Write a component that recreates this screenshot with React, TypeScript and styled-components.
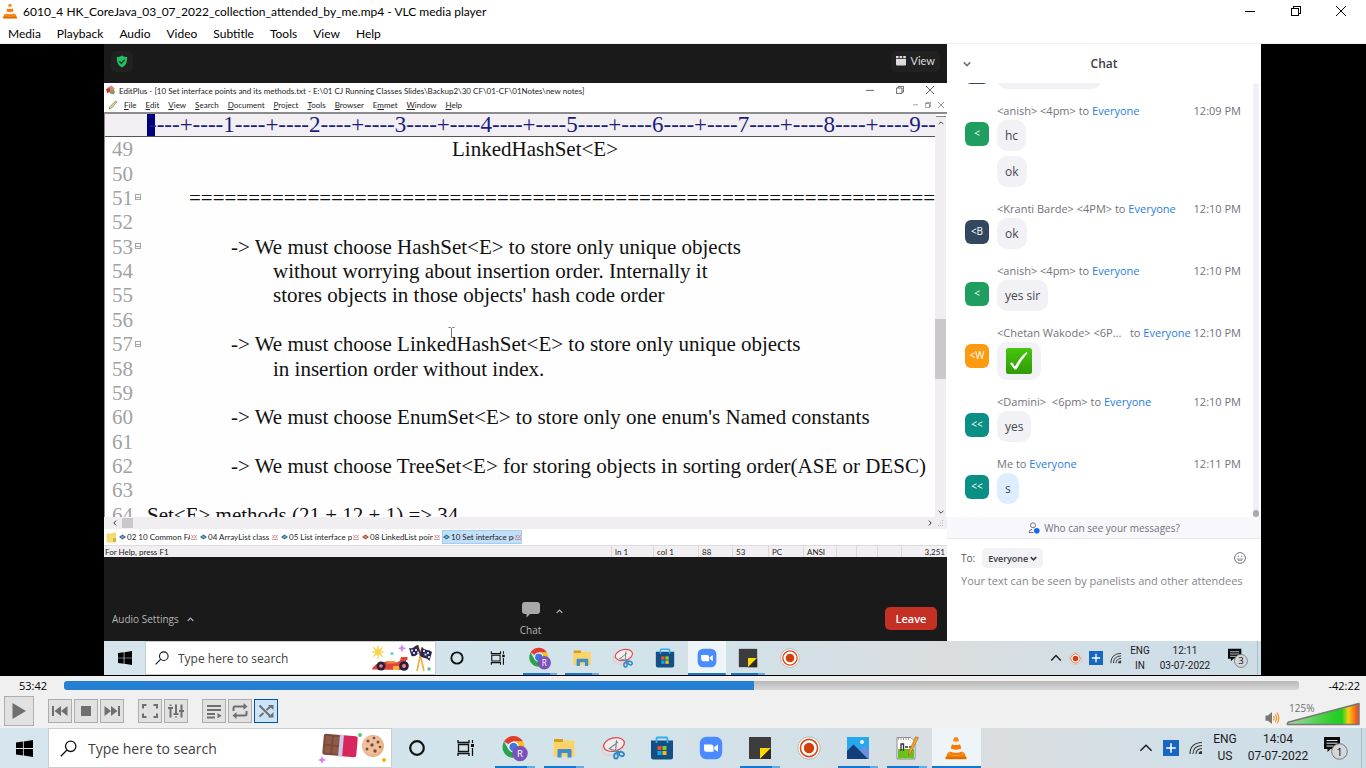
import React from 'react';
import styled, { createGlobalStyle, css } from 'styled-components';

const UI = "'Open Sans', 'Noto Sans', sans-serif";
const NARROW = "Lato, 'Noto Sans', sans-serif";
const TRAY = "Roboto, 'Noto Sans', sans-serif";
const SERIF = "'Liberation Serif', serif";

const GlobalStyle = createGlobalStyle`
  * { box-sizing: border-box; }
  body { margin: 0; background: #000; font-family: ${UI}; font-size: 12px; color: #000; }
  button, input, select, textarea {
    font: inherit; color: inherit; margin: 0; padding: 0; border: 0;
    background: none; border-radius: 0; outline: none;
  }
  svg { display: block; flex: none; }
`;

const Window = styled.div`
  display: flex;
  flex-direction: column;
  height: 100vh;
`;

/* ---------- player title and menu ---------- */

const TitleBar = styled.header`
  display: flex;
  align-items: center;
  flex: none;
  height: 24px;
  padding: 0 3px 2px 2px;
  background: #fff;
`;

const TitleText = styled.h1`
  flex: 1;
  margin: 2px 0 0 5px;
  font-family: ${NARROW};
  font-size: 12px;
  line-height: 16px;
  font-weight: 400;
  white-space: nowrap;
`;

const CaptionButtons = styled.div`
  display: flex;
`;

const CaptionButton = styled.button`
  display: flex;
  justify-content: center;
  align-items: center;
  width: 46px;
  height: 22px;
  &:last-child { width: 44px; }
`;

const MenuBar = styled.nav`
  display: flex;
  flex: none;
  gap: 16px;
  height: 20px;
  padding: 0 8px;
  background: #fff;
  border-bottom: 1px solid #efefef;
  font-family: ${NARROW};
`;

const MenuItem = styled.button`
  font-size: 12px;
  line-height: 20px;
`;

/* ---------- video ---------- */

const Video = styled.main`
  flex: 1;
  min-height: 0;
  display: flex;
  padding: 0 105px 1px 104px;
  background: #000;
`;

const Stage = styled.div`
  flex: 1;
  min-width: 0;
  display: flex;
  flex-direction: column;
`;

const Meeting = styled.div`
  flex: 1;
  display: flex;
  min-height: 0;
`;

const Share = styled.section`
  flex: 1;
  min-width: 0;
  display: flex;
  flex-direction: column;
  background: #1a1a1a;
`;

const ShareTop = styled.div`
  display: flex;
  flex: none;
  justify-content: space-between;
  align-items: center;
  height: 39px;
  padding: 0 7px 5px;
`;

const DarkPill = styled.button`
  display: flex;
  align-items: center;
  justify-content: center;
  gap: 5px;
  min-width: 20px;
  height: 21px;
  padding: 0 5px;
  border-radius: 5px;
  background: #212121;
  color: #dcdcdc;
  font-family: ${NARROW};
  font-size: 11px;
  line-height: 16px;
`;

const ShareBottom = styled.div`
  display: grid;
  flex: none;
  grid-template-columns: 1fr auto 1fr;
  align-items: end;
  height: 84px;
  padding: 0 10px 4px 8px;
  color: #b4b4b4;
  font-size: 10px;
`;

const AudioSettings = styled.button`
  display: flex;
  align-items: center;
  justify-self: start;
  gap: 8px;
  height: 16px;
  margin-bottom: 10px;
`;

const ChatToggle = styled.div`
  display: flex;
  align-items: flex-start;
  gap: 15px;
  padding-left: 34px;
`;

const ChatButton = styled.button`
  display: flex;
  flex-direction: column;
  align-items: center;
  gap: 5px;
  line-height: 14px;
`;

const CaretButton = styled.button`
  padding-top: 6px;
`;

const LeaveButton = styled.button`
  justify-self: end;
  width: 52px;
  height: 23px;
  margin-bottom: 7px;
  border-radius: 5px;
  background: #c43024;
  color: #fff;
  font-size: 11px;
  font-weight: 600;
`;

/* ---------- editor ---------- */

const Editor = styled.div`
  flex: 1;
  min-height: 0;
  display: flex;
  flex-direction: column;
  background: #fff;
`;

const EditorTitle = styled.div`
  display: flex;
  align-items: center;
  height: 15px;
  padding: 0 13px 2px 2px;
  font-family: ${NARROW};
  font-size: 8px;
  color: #222;
  white-space: nowrap;
`;

const EditorTitleText = styled.span`
  flex: 1;
  margin: 2px 0 0 3px;
`;

const EditorCaption = styled.div`
  display: flex;
  gap: 22px;
`;

const EditorMenu = styled.div`
  display: flex;
  align-items: center;
  height: 14px;
  padding: 0 3px 0 4px;
  font-family: ${NARROW};
  font-size: 8px;
  color: #222;
`;

const EditorMenuList = styled.div`
  flex: 1;
  display: flex;
  gap: 9px;
  margin-left: 6px;
`;

const EditorMenuItem = styled.button`
  line-height: 12px;
`;

const ChildCaption = styled.div`
  display: flex;
  gap: 7px;
`;

const Document = styled.div`
  flex: 1;
  min-height: 0;
  display: flex;
  border-top: 2px solid #8d8b8d;
  border-left: 1px solid #8d8b8d;
`;

const Page = styled.div`
  flex: 1;
  min-width: 0;
  display: flex;
  flex-direction: column;
`;

const Ruler = styled.div`
  display: flex;
  flex: none;
  height: 23px;
  overflow: hidden;
  background: #f1eff2;
  border-bottom: 1px solid #555;
  font-family: ${SERIF};
  font-size: 23px;
  line-height: 21px;
  color: #1c1c80;
  white-space: nowrap;
`;

const RulerCursor = styled.span`
  flex: none;
  width: 8px;
  margin: 0 -6px 0 42px;
  background: #00007c;
`;

const CodeWindow = styled.div`
  flex: 1;
  min-height: 0;
  overflow: hidden;
  background: #fefefe;
`;

const CodeLines = styled.div`
  display: grid;
  grid-auto-rows: 1fr;
  height: calc(100% + 10px);
  font-family: ${SERIF};
  font-size: 21px;
  color: #111;
`;

const CodeLine = styled.div<{ $indent: number }>`
  display: flex;
  align-items: center;
  min-height: 0;
  line-height: 24px;
  white-space: pre;
  padding-left: 7px;
  & > code {
    font: inherit;
    margin-left: ${(p) => p.$indent}px;
  }
`;

const LineNumber = styled.span`
  width: 23px;
  color: #a2a2a2;
`;

const FoldMark = styled.span`
  display: flex;
  width: 12px;
`;

const VScroll = styled.div`
  display: flex;
  flex-direction: column;
  align-items: center;
  width: 12px;
  padding: 0 0 2px;
  background: #f0eef1;
  border-right: 1px solid #fff;
`;

const SplitHandle = styled.span`
  width: 10px;
  height: 3px;
  margin-bottom: 3px;
  background: #fff;
  border-bottom: 1px solid #888;
`;

const VTrack = styled.div`
  flex: 1;
  display: flex;
  flex-direction: column;
  align-self: stretch;
  padding-top: 193px;
`;

const VThumb = styled.span`
  height: 60px;
  background: #cbc8cc;
`;

const HScroll = styled.div`
  display: flex;
  flex: none;
  align-items: center;
  gap: 4px;
  height: 12px;
  padding: 0 3px 0 8px;
  background: #f0eef1;
`;

const HThumb = styled.span`
  width: 11px;
  height: 10px;
  margin-right: auto;
  background: #cbc8cc;
`;

const FileTabs = styled.div`
  display: flex;
  flex: none;
  align-items: center;
  height: 16px;
  padding-left: 2px;
  font-family: ${NARROW};
  font-size: 8px;
  background: #fff;
`;

const FileTab = styled.button<{ $active?: boolean }>`
  display: flex;
  align-items: center;
  gap: 1px;
  width: 80px;
  height: 14px;
  margin-left: 1px;
  padding: 0 1px;
  white-space: nowrap;
  color: #222;
  background: ${(p) => (p.$active ? '#c2dffa' : 'transparent')};
  box-shadow: ${(p) => (p.$active ? 'inset 0 0 0 1px #a4cdf2' : 'none')};
`;

const TabName = styled.span`
  flex: 1;
  min-width: 0;
  overflow: hidden;
  text-align: left;
`;

const StatusBar = styled.div`
  display: flex;
  flex: none;
  height: 12px;
  background: #f1eff1;
  border-top: 1px solid #dedcde;
  font-family: ${NARROW};
  font-size: 8px;
  line-height: 12px;
  color: #222;
  white-space: nowrap;
`;

const StatusHelp = styled.span`
  flex: 1;
  padding-left: 1px;
`;

const StatusCell = styled.span<{ $w: number; $end?: boolean }>`
  width: ${(p) => p.$w}px;
  padding: 0 ${(p) => (p.$end ? 2 : 0)}px 0 3px;
  border-left: 1px solid #d9d7d9;
  text-align: ${(p) => (p.$end ? 'right' : 'left')};
`;

const TextCursor = styled.div`
  position: absolute;
  left: 446px;
  top: 327px;
`;

/* ---------- chat ---------- */

const Chat = styled.aside`
  width: 314px;
  flex: none;
  display: flex;
  flex-direction: column;
  background: #fff;
  color: #72727c;
`;

const ChatHeader = styled.div`
  display: grid;
  flex: none;
  grid-template-columns: 24px 1fr 24px;
  align-items: center;
  height: 39px;
  padding: 0 16px;
`;

const ChatTitle = styled.h2`
  margin: 0;
  font-size: 12px;
  line-height: 16px;
  font-weight: 600;
  text-align: center;
  color: #3c3c42;
`;

const ChatBody = styled.div`
  flex: 1;
  min-height: 0;
  display: flex;
  padding-right: 2px;
`;

const Messages = styled.div`
  flex: 1;
  min-width: 0;
  height: 100%;
  overflow: hidden;
  display: flex;
  flex-direction: column;
  justify-content: flex-end;
  gap: 13px;
  padding: 0 12px 13px 18px;
`;

const ChatTrack = styled.div`
  display: flex;
  align-items: flex-end;
  width: 6px;
  border-radius: 3px 3px 0 0;
  background: #f1f0f5;
`;

const ChatThumb = styled.span`
  width: 6px;
  height: 7px;
  border-radius: 3px;
  background: #a9a9ae;
`;

const MessageRow = styled.article`
  display: grid;
  grid-template-columns: 24px 1fr;
  column-gap: 8px;
  flex: none;
`;

const MessageHead = styled.header`
  grid-column: 2;
  display: flex;
  height: 18px;
  font-size: 11px;
  line-height: 18px;
  white-space: pre;
`;

const Everyone = styled.a`
  color: #2a7de1;
  text-decoration: none;
`;

const Time = styled.time`
  margin-left: auto;
`;

const Avatar = styled.span<{ $color: string }>`
  grid-column: 1;
  width: 24px;
  height: 24px;
  margin-top: 2px;
  border-radius: 6px;
  background: ${(p) => p.$color};
  color: #fff;
  font-size: 10px;
  line-height: 23px;
  text-align: center;
`;

const Bubbles = styled.div`
  grid-column: 2;
  display: flex;
  flex-direction: column;
  align-items: flex-start;
  gap: 5px;
`;

const Bubble = styled.div<{ $mine?: boolean; $w?: number }>`
  min-height: 31px;
  width: ${(p) => (p.$w ? `${p.$w}px` : 'auto')};
  padding: 6px 8px;
  border-radius: 10px;
  background: ${(p) => (p.$mine ? '#dceeff' : '#f2f1f6')};
  color: #47474e;
  font-size: 12px;
  line-height: 19px;
`;

const Notice = styled.button`
  display: flex;
  flex: none;
  justify-content: center;
  align-items: center;
  gap: 4px;
  height: 22px;
  background: #f7f7fc;
  border-bottom: 1px solid #e6e6ef;
  font-size: 10px;
`;

const Compose = styled.div`
  display: flex;
  flex: none;
  flex-direction: column;
  height: 102px;
  padding: 9px 14px 0;
`;

const ComposeTo = styled.div`
  display: flex;
  align-items: center;
  height: 20px;
  margin-bottom: 4px;
  padding-right: 1px;
  font-size: 10px;
  color: #55555c;
`;

const Recipient = styled.span`
  display: flex;
  align-items: center;
  height: 20px;
  margin: 0 auto 0 7px;
  padding: 0 6px;
  border-radius: 5px;
  background: #f2f1f6;
  color: #3c3c42;
`;

const RecipientSelect = styled.select`
  appearance: none;
  width: 42px;
  font-size: 9px;
  font-weight: 600;
`;

const IconButton = styled.button`
  display: flex;
`;

const ComposeText = styled.textarea`
  flex: 1;
  resize: none;
  overflow: hidden;
  font-size: 11px;
  line-height: 18px;
  white-space: nowrap;
  &::placeholder { color: #85858d; opacity: 1; }
`;

/* ---------- windows taskbar (recorded one is compact) ---------- */

const Bar = styled.footer<{ $compact?: boolean }>`
  display: flex;
  flex: none;
  align-items: stretch;
  height: ${(p) => (p.$compact ? 34 : 40)}px;
  background: linear-gradient(90deg, #d5e4ed, #d2e3ea 45%, #d4e0e6 62%, #dadddf 72%, #d0dfe7 88%, #cddde6);
`;

const StartButton = styled.button<{ $compact?: boolean }>`
  display: flex;
  align-items: center;
  justify-content: center;
  width: ${(p) => (p.$compact ? 41 : 48)}px;
`;

const SearchBox = styled.label<{ $compact?: boolean }>`
  display: flex;
  align-items: center;
  width: ${(p) => (p.$compact ? 291 : 344)}px;
  padding: 0 ${(p) => (p.$compact ? '1px 0 9px' : '5px 0 11px')};
  background: #fff;
  border: 1px solid #c8cdd0;
  font-size: ${(p) => (p.$compact ? 12 : 14)}px;
  color: #3f3f3f;
`;

const SearchInput = styled.input<{ $compact?: boolean }>`
  flex: 1;
  min-width: 0;
  margin-left: ${(p) => (p.$compact ? 9 : 11)}px;
  &::placeholder { color: #3f3f3f; opacity: 1; }
`;

const Apps = styled.div<{ $compact?: boolean; $n: number }>`
  display: grid;
  grid-template-columns: repeat(${(p) => p.$n}, 1fr);
  width: ${(p) => (p.$compact ? 375 : 589)}px;
`;

const AppButton = styled.button<{ $state?: string; $compact?: boolean }>`
  display: flex;
  align-items: center;
  justify-content: center;
  margin: 0 ${(p) => (p.$compact ? 2 : 0)}px;
  ${(p) =>
    p.$state === 'running' &&
    css`
      background: linear-gradient(90deg, #1179d3 80%, #62abe6 80%) center bottom / ${p.$compact ? 34 : 40}px 2px no-repeat;
    `}
  ${(p) =>
    p.$state === 'active' &&
    css`
      background: linear-gradient(#1179d3, #1179d3) center bottom / 100% 2px no-repeat, #eef5f9;
    `}
`;

const Tray = styled.div<{ $compact?: boolean }>`
  display: flex;
  align-items: center;
  margin-left: auto;
  gap: ${(p) => (p.$compact ? 7 : 10)}px;
  padding-right: ${(p) => (p.$compact ? 3 : 4)}px;
  color: #1b1b1b;
  font-family: ${TRAY};
  font-size: ${(p) => (p.$compact ? 10 : 12)}px;
  line-height: ${(p) => (p.$compact ? 15 : 17)}px;
`;

const TrayText = styled.div<{ $w: number }>`
  width: ${(p) => p.$w}px;
  text-align: center;
  white-space: nowrap;
`;

const NotifyButton = styled.button<{ $compact?: boolean }>`
  display: flex;
  margin-left: ${(p) => (p.$compact ? 9 : 5)}px;
`;

const PeekLine = styled.span<{ $compact?: boolean }>`
  align-self: stretch;
  width: 1px;
  margin-left: ${(p) => (p.$compact ? 2 : 3)}px;
  background: #aebcc4;
`;

/* ---------- player controls ---------- */

const Controls = styled.section`
  flex: none;
  height: 52px;
  padding: 3px 6px 0 4px;
  background: #f0f0f0;
`;

const SeekRow = styled.div`
  display: flex;
  align-items: center;
  height: 14px;
  font-size: 11px;
  line-height: 14px;
`;

const Elapsed = styled.span`
  width: 60px;
  padding-left: 15px;
`;

const Remaining = styled.span`
  width: 61px;
  text-align: right;
`;

const Seek = styled.input`
  flex: 1;
  min-width: 0;
  appearance: none;
  height: 9px;
  margin-bottom: 2px;
  border-radius: 3px;
  background: linear-gradient(90deg, #257fd3 55.9%, transparent 55.9%), linear-gradient(#b8b8b8, #d8d8d8);
  &::-webkit-slider-thumb { appearance: none; width: 0; height: 9px; }
`;

const ButtonRow = styled.div`
  display: flex;
  align-items: center;
  gap: 14px;
  height: 30px;
  margin-top: 3px;
`;

const ButtonGroup = styled.div`
  display: flex;
  gap: 2px;
`;

const ControlButton = styled.button<{ $big?: boolean; $on?: boolean }>`
  display: flex;
  align-items: center;
  justify-content: center;
  width: ${(p) => (p.$big ? 30 : 24)}px;
  height: ${(p) => (p.$big ? 30 : 24)}px;
  border: 1px solid ${(p) => (p.$on ? '#00559b' : '#adadad')};
  background: ${(p) => (p.$on ? '#cce4f7' : '#e1e1e1')};
  color: #6f6f6f;
`;

const Volume = styled.div`
  display: flex;
  align-items: flex-end;
  gap: 6px;
  align-self: flex-end;
  margin-left: auto;
`;

const VolumeMeter = styled.div`
  position: relative;
`;

const VolumeLabel = styled.span`
  position: absolute;
  left: 3px;
  top: 0;
  font-size: 10px;
  line-height: 12px;
  color: #707070;
`;

/* ---------- drawings ---------- */

const Cone = ({ size }: { size: number }) => (
  <svg width={size} height={size} viewBox="0 0 24 24">
    <path d="M4 16.500h16l2.800 5.700q.2 1-.6 1H1.800q-.8 0-.6-1z" fill="#f57c00" />
    <path d="M10 1.800q2-1.400 4 0L19.300 18q-7.300 3.600-14.600 0z" fill="#f1f1f1" />
    <path d="M10 1.800q2-1.400 4 0l1 3.200q-3 1.300-6 0z" fill="#f58a1b" />
    <path d="M8 8.200q4 1.700 8 0l1.400 4.300q-5.400 2.300-10.800 0z" fill="#f57c00" />
    <path d="M5.600 15.600q6.400 2.900 12.800 0l.9 2.400q-7.300 3.600-14.600 0z" fill="#f57c00" />
    <path d="M2 22h20" stroke="#c75a00" strokeWidth="1" />
  </svg>
);

const Caption = ({ kind, s, c = '#000' }: { kind: string; s: number; c?: string }) => (
  <svg width={s} height={s} viewBox="0 0 10 10" fill="none" stroke={c} strokeWidth="1" shapeRendering={s > 9 ? 'crispEdges' : 'auto'}>
    {kind === 'min' && <path d="M0 5.500h10" />}
    {kind === 'max' && <path d="M.5 2.500h7v7h-7zM2.500 2.500v-2h7v7h-2" />}
    {kind === 'close' && <path d="M0 0l10 10M10 0L0 10" shapeRendering="auto" />}
  </svg>
);

const Chevron = ({ dir, w, c = 'currentColor', t = 1.3 }: { dir: 'up' | 'down' | 'left' | 'right'; w: number; c?: string; t?: number }) => {
  const paths = { up: 'M1 7l4-4 4 4', down: 'M1 3l4 4 4-4', left: 'M7 1L3 5l4 4', right: 'M3 1l4 4-4 4' };
  return (
    <svg width={w} height={w} viewBox="0 0 10 10" fill="none" stroke={c} strokeWidth={(t * 10) / w}>
      <path d={paths[dir]} />
    </svg>
  );
};

const Shield = () => (
  <svg width="12" height="13" viewBox="0 0 12 13">
    <path d="M6 .5c1.600 1.200 3.400 1.600 5.200 1.600 0 5-1 8.400-5.200 10.400C1.800 10.500.8 7.100.8 2.100 2.600 2.100 4.400 1.700 6 .5z" fill="#22c15e" />
    <path d="M3.300 6.200l2 2 3.400-3.500" fill="none" stroke="#1a3a26" strokeWidth="1.300" />
  </svg>
);

const ViewGlyph = () => (
  <svg width="10" height="10" viewBox="0 0 10 10" fill="#dcdcdc">
    <path d="M0 0h2.600v2.200H0zM3.600 0h2.600v2.200H3.600zM7.200 0H9.800v2.200H7.200zM0 3h10v5.500q0 1-1 1H1q-1 0-1-1z" />
  </svg>
);

const Speech = () => (
  <svg width="18" height="16" viewBox="0 0 18 16">
    <path d="M3 0h12q3 0 3 3v6q0 3-3 3H8l-3.500 3.600V12H3q-3 0-3-3V3q0-3 3-3z" fill="#a8a8a8" />
  </svg>
);

const EditPlusLogo = () => (
  <svg width="10" height="10" viewBox="0 0 10 10">
    <path d="M1 3l4-2.500L8.500 3 8 9 4 8z" fill="#d88b7d" />
    <path d="M0 4l4-1v4L1 8z" fill="#c03a3a" />
    <path d="M5 5l4 1-1 3.500-4-1z" fill="#7d9a6b" />
  </svg>
);

const Pencil = () => (
  <svg width="10" height="10" viewBox="0 0 10 10">
    <path d="M1 9l1-2.500L8 .8l1 1L3.500 8z" fill="#e9dca2" stroke="#77703f" strokeWidth=".7" />
  </svg>
);

const Fold = () => (
  <svg width="7" height="7" viewBox="0 0 7 7" fill="none" stroke="#a5a5a5" shapeRendering="crispEdges">
    <path d="M.5.5h5v5h-5zM1 3.500h5" />
  </svg>
);

const IBeam = () => (
  <svg width="10" height="18" viewBox="0 0 10 18" fill="none" stroke="#777">
    <path d="M2.500.5h2l1 1 1-1h2M5.500 1v10" />
  </svg>
);

const TabMark = ({ c }: { c: string }) => (
  <svg width="7" height="6" viewBox="0 0 7 6">
    <path d="M0 3l3.500-2.600L7 3 3.500 5.600z" fill={c} />
    <path d="M2.500 3h2" stroke="#dfe9f2" />
  </svg>
);

const TabClose = () => (
  <svg width="6" height="6" viewBox="0 0 6 6" stroke="#c9838a" strokeWidth=".8" fill="none">
    <path d="M.3 1l2.400 3.400M2.700 1L.3 4.400M3.300 1l2.400 3.400M5.700 1L3.300 4.400M0 5.500h6" />
  </svg>
);

const Folder = () => (
  <svg width="11" height="11" viewBox="0 0 11 11">
    <path d="M.5 1.500h5l1-1H10v10H.5z" fill="#f3dc74" />
    <path d="M7 6h3v4H7z" fill="#d9b53d" />
  </svg>
);

const Grip = () => (
  <svg width="7" height="7" viewBox="0 0 7 7" fill="#b9b7ba">
    <path d="M5 0h1v1H5zM3 2.500h1v1H3zM5 2.500h1v1H5zM1 5h1v1H1zM3 5h1v1H3zM5 5h1v1H5z" />
  </svg>
);

const Tick = () => (
  <svg width="28" height="26" viewBox="0 0 28 26">
    <defs>
      <linearGradient id="tick" x2="0" y2="1">
        <stop offset="0" stopColor="#48c60c" />
        <stop offset="1" stopColor="#2d9c06" />
      </linearGradient>
    </defs>
    <rect x="1" width="26" height="26" rx="2.500" fill="url(#tick)" />
    <path d="M5 15.500l2-1.200 3 4.200Q14.500 9.500 21.500 4l1 .9Q16 12 11.500 21.500H9.600z" fill="#fff" />
  </svg>
);

const PersonDot = () => (
  <svg width="12" height="12" viewBox="0 0 12 12" fill="none">
    <circle cx="5" cy="3.300" r="2.500" stroke="#72727c" />
    <path d="M4 7.300Q1 7.600 1 10.500h4.500" stroke="#72727c" />
    <circle cx="8.800" cy="8.800" r="2.800" fill="#0e6cf0" />
  </svg>
);

const Smiley = () => (
  <svg width="12" height="12" viewBox="0 0 12 12" fill="none" stroke="#72727c">
    <circle cx="6" cy="6" r="5.400" />
    <path d="M3.300 7Q6 10.500 8.700 7z" strokeWidth=".8" />
    <path d="M4.200 3.500v1.500M7.800 3.500v1.500" />
  </svg>
);

const WinLogo = ({ s }: { s: number }) => (
  <svg width={s} height={s} viewBox="0 0 16 16">
    <path d="M0 2.300L6.500 1.400v6.200H0zM7.300 1.300L16 0v7.600H7.300zM0 8.400h6.500v6.200L0 13.700zM7.300 8.400H16V16l-8.700-1.300z" />
  </svg>
);

const Magnifier = ({ s }: { s: number }) => (
  <svg width={s} height={s} viewBox="0 0 17 17" fill="none" stroke="#111" strokeWidth="1.300">
    <circle cx="10.700" cy="6.300" r="5.200" />
    <path d="M7 10L.8 16.200" />
  </svg>
);

const RaceArt = () => (
  <svg width="62" height="28" viewBox="0 0 62 28">
    <path d="M6 1.500v13M-.5 8h13M1.400 3.400l9.200 9.200M10.600 3.400l-9.200 9.200" stroke="#f5c542" strokeWidth="1.200" />
    <circle cx="6" cy="8" r="3.300" fill="#ffd447" />
    <circle cx="20" cy="9.500" r="1.600" fill="#58cfe0" />
    <path d="M30 0l1.200 3 3 1.200-3 1.200-1.200 3-1.200-3-3-1.200 3-1.200z" fill="#d58af2" />
    <path d="M0 25.500q1-4 7-6.500l10-2 8 1.500 3-2 1-3.500h6.500v3h-1.500v10z" fill="#e2433a" />
    <path d="M15 17h8v2.500h-8z" fill="#f28a3a" />
    <path d="M21 22h6v4h-6z" fill="#f6b33c" />
    <circle cx="9" cy="22" r="4.500" fill="#28203f" />
    <circle cx="9" cy="22" r="1.800" fill="#e88" />
    <circle cx="32" cy="22" r="4.800" fill="#28203f" />
    <circle cx="32" cy="22" r="2" fill="#e88" />
    <path d="M46 1l6 26M50 3l-5 24" stroke="#f0ac3c" strokeWidth="1.600" fill="none" />
    <path d="M37 4q3 1 5-1t4-2l2.500 8q-2 0-4 2t-5 1z" fill="#2c2852" />
    <path d="M50 3q2 3 5 3t5 2l-2.500 9q-2-3-5-3t-5-3z" fill="#2c2852" />
    <path d="M39 5.500h2v2h-2zM43 5h2v2h-2zM41 8h2v2h-2zM45 7.500h2v2h-2zM51 6h2v2h-2zM55 8h2v2h-2zM52.500 9.500h2v2h-2zM56 12h2v2h-2z" fill="#cfd2ec" />
    <circle cx="57" cy="25" r="1.800" fill="#55c78c" />
  </svg>
);

const SweetsArt = () => (
  <svg width="68" height="32" viewBox="0 0 68 32">
    <g transform="rotate(5 22 14)">
      <rect x="5" y="3" width="18" height="21" rx="2" fill="#7b4a3a" />
      <path d="M7 5h6v8H7zM15 5h6v8h-6zM7 15h6v7H7zM15 15h6v7h-6z" fill="#8f5b49" />
      <path d="M22 3h15q2 0 2 2v17q0 2-2 2H22z" fill="#d7265e" />
      <path d="M21 2l4 1v21l-4 1z" fill="#cfc8ec" />
    </g>
    <path d="M4 24l1.200 2.800L8 28l-2.800 1.200L4 32l-1.200-2.800L0 28l2.800-1.200z" fill="#dd7cf2" />
    <circle cx="42" cy="3" r="2" fill="#4fd06a" />
    <circle cx="55" cy="14" r="11" fill="#e8b48c" />
    <circle cx="54" cy="13" r="9.500" fill="#efc09a" />
    <g fill="#7a4a3c">
      <circle cx="50" cy="9" r="1.600" />
      <circle cx="56" cy="6" r="1.300" />
      <circle cx="60" cy="10" r="1.500" />
      <circle cx="54" cy="13" r="1.700" />
      <circle cx="49" cy="17" r="1.500" />
      <circle cx="57" cy="19" r="1.700" />
      <circle cx="62" cy="15" r="1.300" />
    </g>
    <circle cx="66" cy="28" r="2" fill="#f6b516" />
  </svg>
);

const AppIcon = ({ name, s }: { name: string; s: number }) => {
  const box = { width: s, height: s, viewBox: '0 0 24 24' };
  switch (name) {
    case 'Cortana':
      return (
        <svg {...box}>
          <circle cx="12" cy="12" r="6.800" fill="none" stroke="#111" strokeWidth="2.200" />
        </svg>
      );
    case 'Task View':
      return (
        <svg {...box} fill="none" stroke="#111" strokeWidth="1.300">
          <path d="M4.500 8.500h10v7h-10zM4 4v2.500h11V4M4 20v-2.500h11V20M18.500 4v3M18.500 12v8" />
          <path d="M17 8h3v3h-3z" fill="#111" stroke="none" />
        </svg>
      );
    case 'Chrome':
      return (
        <svg width={s + 4} height={s + 4} viewBox="0 0 28 28">
          <path d="M12.500 13L2.900 7.500A11.100 11.100 0 0 1 22.100 7.500H12.500z" fill="#e33b2e" />
          <path d="M12.500 13L7.700 15.800 2.900 7.500A11.100 11.100 0 0 0 12.500 24.100l4.800-8.300z" fill="#2ba24c" />
          <path d="M12.500 7.500h9.600A11.100 11.100 0 0 1 12.500 24.100l5.500-9z" fill="#fbc116" />
          <circle cx="12.500" cy="13" r="5.400" fill="#fff" />
          <circle cx="12.500" cy="13" r="4.200" fill="#3b78e7" />
          <circle cx="19" cy="19.500" r="7.800" fill="#7b52b9" />
          <text x="19" y="23" fontSize="9.500" fill="#fff" textAnchor="middle" fontFamily={UI}>R</text>
        </svg>
      );
    case 'File Explorer':
      return (
        <svg {...box}>
          <path d="M2 3h9v4H2z" fill="#d99e13" />
          <path d="M1.500 6h9l1.500-1.500h10.500v16h-21z" fill="#fcd368" />
          <path d="M5.500 21.500v-7.500q0-1 1-1h12q1 0 1 1v7.500h-4v-4.500h-6v4.500z" fill="#3f8fce" />
        </svg>
      );
    case 'Snip':
      return (
        <svg {...box} fill="none">
          <ellipse cx="11" cy="12" rx="10.500" ry="7.500" stroke="#f1c9ca" strokeWidth="1.500" transform="rotate(-12 11 12)" />
          <ellipse cx="13" cy="8.500" rx="10.500" ry="6.500" stroke="#d9474b" strokeWidth="1.300" fill="#f6eeee" transform="rotate(-14 13 8.500)" />
          <path d="M15.500 4l-1 12M7.500 12.500l10 3M8 13l9-7" stroke="#7c8790" strokeWidth="1.200" />
          <g stroke="#2f86c6" strokeWidth="1.800">
            <ellipse cx="15" cy="20" rx="1.900" ry="2.700" />
            <ellipse cx="20.500" cy="18" rx="2.600" ry="2" transform="rotate(30 20.500 18)" />
            <path d="M15 17l3-2" />
          </g>
        </svg>
      );
    case 'Store':
      return (
        <svg {...box}>
          <path d="M1 4.500h22V21q0 2.500-2.500 2.500h-17Q1 23.500 1 21z" fill="#144e86" />
          <path d="M6.500 7V2.500q0-1 1-1h9q1 0 1 1V7" fill="none" stroke="#2cb1ec" strokeWidth="1.800" />
          <path d="M7.500 10h4v4h-4z" fill="#f1511b" />
          <path d="M12.500 10h4v4h-4z" fill="#80cc28" />
          <path d="M7.500 15h4v4h-4z" fill="#00adef" />
          <path d="M12.500 15h4v4h-4z" fill="#fbbc09" />
        </svg>
      );
    case 'Zoom':
      return (
        <svg {...box}>
          <rect x=".8" y=".8" width="22.400" height="22.400" rx="6.500" fill="#4a8cff" />
          <path d="M5 8.500h7q2.500 0 2.500 2.500v4.800H7.500Q5 15.800 5 13.300zM15.300 11l3.700-2.500v7.300L15.300 13.300z" fill="#fff" />
        </svg>
      );
    case 'Sticky Notes':
      return (
        <svg {...box}>
          <path d="M1 1h22v22H1z" fill="#3c3c3c" />
          <path d="M12 12h11L12 23z" fill="#fdd900" />
          <path d="M23 12v11H12z" fill="#2c2c2c" />
        </svg>
      );
    case 'Recorder':
      return (
        <svg {...box}>
          <circle cx="12" cy="12" r="11.200" fill="#fff" stroke="#a39a96" strokeWidth=".7" />
          <circle cx="12" cy="12" r="8.600" fill="none" stroke="#d84a1b" strokeWidth="1.600" />
          <circle cx="12" cy="12" r="5.200" fill="#d33f0c" />
        </svg>
      );
    case 'Photos':
      return (
        <svg {...box}>
          <path d="M1 1h22v22H1z" fill="#28a7ea" />
          <path d="M13 15l5-5 5 5v8H13z" fill="#6c8fe0" />
          <path d="M1 15l6.500-6.500L22 23H1z" fill="#123f7c" />
          <circle cx="16" cy="6" r="2" fill="#e9f6ff" />
        </svg>
      );
    case 'Notepad++':
      return (
        <svg {...box}>
          <path d="M2 1.500h14l4 4V23H2z" fill="#fbfbfb" stroke="#777" strokeWidth=".8" />
          <path d="M3 13h16v9.500H3z" fill="#6cc01e" />
          <path d="M3 3h12" stroke="#555" strokeDasharray="1 1.500" />
          <path d="M6 15V8h2.500v7M10 11h3M14 11h3" stroke="#333" strokeWidth="1.300" fill="none" />
          <path d="M23.500 1.500l-7.500 15-2.500 3 .3-4L20.500.8z" fill="#f2a32a" stroke="#9b5d14" strokeWidth=".5" />
        </svg>
      );
    default:
      return <Cone size={s} />;
  }
};

const Plus = ({ s }: { s: number }) => (
  <svg width={s} height={s} viewBox="0 0 16 16">
    <path d="M0 0h16v16H0z" fill="#1767c1" />
    <path d="M8 3.200v9.600M3.200 8h9.600" stroke="#fff" strokeWidth="1.500" />
  </svg>
);

const Wifi = ({ s }: { s: number }) => (
  <svg width={s} height={s} viewBox="0 0 14 14" fill="none" stroke="#333" strokeWidth="1.100">
    <path d="M1 13Q1 2 13 1.500M4 13Q4 5 13 4.500M7 13Q7 8 13 7.500" />
    <path d="M9.500 13q0-3 3.500-3v3z" fill="#333" stroke="none" />
  </svg>
);

const Notify = ({ n, s }: { n: number; s: number }) => (
  <svg width={s} height={s} viewBox="0 0 24 24">
    <path d="M0 1h16v12H6.500L3.500 16v-3H0z" fill="#0a0a0a" />
    <path d="M2.500 4.500h11M2.500 7.200h11M2.500 10h7" stroke="#d5e1e7" />
    <circle cx="15.500" cy="15.500" r="7.800" fill="#d3d7da" stroke="#777" />
    <text x="15.500" y="19.500" fontSize="11.500" fill="#111" textAnchor="middle" fontFamily={UI}>{n}</text>
  </svg>
);

const ControlIcon = ({ name }: { name: string }) => {
  if (name === 'Play')
    return (
      <svg width="16" height="18" viewBox="0 0 16 18" fill="currentColor"><path d="M1.500 1l13.500 8-13.500 8z" /></svg>
    );
  return (
    <svg width="18" height="18" viewBox="0 0 18 18" fill="none" stroke="currentColor" strokeWidth="2">
      {name === 'Previous' && <path d="M1 4h2v10H1zM3.500 9L10 4v10zM10 9l6.500-5v10z" fill="currentColor" stroke="none" />}
      {name === 'Stop' && <path d="M4 4h10v10H4z" fill="currentColor" stroke="none" />}
      {name === 'Next' && <path d="M17 4h-2v10h2zM14.500 9L8 4v10zM8 9L1.500 4v10z" fill="currentColor" stroke="none" />}
      {name === 'Fullscreen' && <path d="M2 6.500V3h3.500M12.500 3H16v3.500M16 11.500V15h-3.500M5.500 15H2v-3.500" />}
      {name === 'Effects' && (
        <path d="M3.500 5v10.500M9 2.500V13M14.500 2.500v13M1 6h5M6.500 12h5M12 9h5M3.500 2.500v1.500M9 14.500v1" />
      )}
      {name === 'Playlist' && (
        <>
          <path d="M2 4h14M2 8h14M2 12h8M2 15.500h8" />
          <path d="M12.500 11l4 2.800-4 2.800z" fill="currentColor" stroke="none" />
        </>
      )}
      {name === 'Loop' && (
        <>
          <path d="M2.500 9V6q0-1.500 1.500-1.500h9M15.500 9v3q0 1.500-1.500 1.500H5" />
          <path d="M12.500 1l4 3.500-4 3.500zM5.500 10l-4 3.500 4 3.500z" fill="currentColor" stroke="none" />
        </>
      )}
      {name === 'Random' && (
        <>
          <path d="M2.500 3.500l11 11M2.500 14.500l4-3.500M9.500 8l4-3.500" />
          <path d="M11 3h5.500v5zM16.500 10v5.500H11z" fill="currentColor" stroke="none" />
        </>
      )}
    </svg>
  );
};

const Speaker = () => (
  <svg width="15" height="15" viewBox="0 0 15 15" fill="none">
    <path d="M.5 4.500H3L7 1v12L3 9.800H.5z" fill="#777" />
    <g stroke="#f49425" strokeWidth="1.200">
      <path d="M8.500 5q1.400 2.200 0 4.500M10.300 3.300q2.600 3.900 0 7.700M12 1.500q3.600 5.600 0 11" />
    </g>
  </svg>
);

const VolumeWedge = () => (
  <svg width="74" height="24" viewBox="0 0 74 24">
    <defs>
      <linearGradient id="vol">
        <stop offset="0" stopColor="#a8d8a8" />
        <stop offset=".6" stopColor="#2fcf2f" />
        <stop offset=".76" stopColor="#1fce1f" />
        <stop offset=".85" stopColor="#f2d211" />
        <stop offset=".97" stopColor="#f4531c" />
      </linearGradient>
    </defs>
    <path d="M1.500 22.500Q1 20.500 3 20L73 1.500v21z" fill="url(#vol)" stroke="#777" strokeWidth="1.500" strokeLinejoin="round" />
  </svg>
);

/* ---------- data ---------- */

const menus = ['Media', 'Playback', 'Audio', 'Video', 'Subtitle', 'Tools', 'View', 'Help'];

const editorMenus: [string, string, string][] = [
  ['', 'F', 'ile'], ['', 'E', 'dit'], ['', 'V', 'iew'], ['', 'S', 'earch'], ['', 'D', 'ocument'], ['', 'P', 'roject'],
  ['', 'T', 'ools'], ['', 'B', 'rowser'], ['E', 'm', 'met'], ['', 'W', 'indow'], ['', 'H', 'elp'],
];

const code: { n: number; indent?: number; text?: string; fold?: boolean }[] = [
  { n: 49, indent: 305, text: 'LinkedHashSet<E>' },
  { n: 50 },
  { n: 51, indent: 42, text: '='.repeat(63), fold: true },
  { n: 52 },
  { n: 53, indent: 84, text: '-> We must choose HashSet<E> to store only unique objects', fold: true },
  { n: 54, indent: 126, text: 'without worrying about insertion order. Internally it' },
  { n: 55, indent: 126, text: "stores objects in those objects' hash code order" },
  { n: 56 },
  { n: 57, indent: 84, text: '-> We must choose LinkedHashSet<E> to store only unique objects', fold: true },
  { n: 58, indent: 126, text: 'in insertion order without index.' },
  { n: 59 },
  { n: 60, indent: 84, text: "-> We must choose EnumSet<E> to store only one enum's Named constants" },
  { n: 61 },
  { n: 62, indent: 84, text: '-> We must choose TreeSet<E> for storing objects in sorting order(ASE or DESC)' },
  { n: 63 },
  { n: 64, indent: 0, text: 'Set<E> methods (21 + 12 + 1) => 34' },
];

const fileTabs = [
  { name: '02 10 Common FA', c: '#2f6f9e' },
  { name: '04 ArrayList class 1', c: '#2f6f9e' },
  { name: '05 List interface po', c: '#2f6f9e' },
  { name: '08 LinkedList points', c: '#b4502e' },
  { name: '10 Set interface po', c: '#2f6f9e', active: true },
];

const statusCells: [string, number][] = [
  ['ln 1', 42], ['col 1', 45], ['88', 34], ['53', 36], ['PC', 35], ['ANSI', 33], ['', 20], ['', 21], ['', 24],
];

type Msg = { from: string; time: string; initials: string; color: string; bubbles: string[]; mine?: boolean };
const messages: Msg[] = [
  { from: '<anish> <4pm>', time: '12:09 PM', initials: '<', color: '#209e5f', bubbles: ['hc', 'ok'] },
  { from: '<Kranti Barde> <4PM>', time: '12:10 PM', initials: '<B', color: '#33475f', bubbles: ['ok'] },
  { from: '<anish> <4pm>', time: '12:10 PM', initials: '<', color: '#209e5f', bubbles: ['yes sir'] },
  { from: '<Chetan Wakode> <6P...  ', time: '12:10 PM', initials: '<W', color: '#fc9b11', bubbles: ['tick'] },
  { from: '<Damini>  <6pm>', time: '12:10 PM', initials: '<<', color: '#0a8f84', bubbles: ['yes'] },
  { from: 'Me', time: '12:11 PM', initials: '<<', color: '#0a8f84', bubbles: ['s'], mine: true },
];

type AppDef = [string, string?];
const recordedApps: AppDef[] = [
  ['Cortana'], ['Task View'], ['Chrome', 'running'], ['File Explorer', 'running'], ['Snip'], ['Store'],
  ['Zoom', 'active'], ['Sticky Notes', 'running'], ['Recorder'],
];
const desktopApps: AppDef[] = [
  ['Cortana'], ['Task View'], ['Chrome', 'running'], ['File Explorer', 'running'], ['Snip'], ['Store'], ['Zoom'],
  ['Sticky Notes', 'running'], ['Recorder'], ['Photos', 'running'], ['Notepad++', 'running'], ['VLC', 'active'],
];

/* ---------- parts ---------- */

const Taskbar = ({ compact, apps, lang, time, date, count }: {
  compact?: boolean; apps: AppDef[]; lang: string; time: string; date: string; count: number;
}) => (
  <Bar $compact={compact}>
    <StartButton $compact={compact} aria-label="Start"><WinLogo s={compact ? 14 : 17} /></StartButton>
    <SearchBox $compact={compact}>
      <Magnifier s={compact ? 14 : 17} />
      <SearchInput $compact={compact} placeholder="Type here to search" aria-label="Search" />
      {compact ? <RaceArt /> : <SweetsArt />}
    </SearchBox>
    <Apps $compact={compact} $n={apps.length}>
      {apps.map(([name, state]) => (
        <AppButton key={name} $compact={compact} $state={state} aria-label={name}>
          <AppIcon name={name} s={compact ? 20 : 24} />
        </AppButton>
      ))}
    </Apps>
    <Tray $compact={compact}>
      <Chevron dir="up" w={compact ? 12 : 14} t={1.4} />
      {compact && <AppIcon name="Recorder" s={13} />}
      <Plus s={compact ? 14 : 16} />
      <Wifi s={compact ? 12 : 14} />
      <TrayText $w={compact ? 22 : 24}>ENG<br />{lang}</TrayText>
      <TrayText $w={compact ? 54 : 62}>{time}<br />{date}</TrayText>
      <NotifyButton $compact={compact} aria-label="Notifications"><Notify n={count} s={compact ? 20 : 24} /></NotifyButton>
      <PeekLine $compact={compact} />
    </Tray>
  </Bar>
);

const EditorPane = () => (
  <Editor>
    <EditorTitle>
      <EditPlusLogo />
      <EditorTitleText>
        {'EditPlus - [10 Set interface points and its methods.txt - E:\\01 CJ Running Classes Slides\\Backup2\\30 CF\\01-CF\\01Notes\\new notes]'}
      </EditorTitleText>
      <EditorCaption>
        <Caption kind="min" s={8} c="#444" />
        <Caption kind="max" s={8} c="#444" />
        <Caption kind="close" s={8} c="#444" />
      </EditorCaption>
    </EditorTitle>
    <EditorMenu>
      <Pencil />
      <EditorMenuList>
        {editorMenus.map(([a, u, b]) => (
          <EditorMenuItem key={b}>{a}<u>{u}</u>{b}</EditorMenuItem>
        ))}
      </EditorMenuList>
      <ChildCaption>
        <Caption kind="min" s={5} c="#555" />
        <Caption kind="max" s={6} c="#555" />
        <Caption kind="close" s={6} c="#555" />
      </ChildCaption>
    </EditorMenu>
    <Document>
      <Page>
        <Ruler>
          <RulerCursor />
          {[1, 2, 3, 4, 5, 6, 7, 8, 9].map((n) => `----+----${n}`).join('') + '--'}
        </Ruler>
        <CodeWindow>
          <CodeLines>
            {code.map((l) => (
              <CodeLine key={l.n} $indent={l.indent ?? 0}>
                <LineNumber>{l.n}</LineNumber>
                <FoldMark>{l.fold && <Fold />}</FoldMark>
                <code>{l.text}</code>
              </CodeLine>
            ))}
          </CodeLines>
        </CodeWindow>
      </Page>
      <VScroll>
        <SplitHandle />
        <Chevron dir="up" w={6} t={1} c="#444" />
        <VTrack><VThumb /></VTrack>
        <Chevron dir="down" w={6} t={1} c="#444" />
      </VScroll>
    </Document>
    <HScroll>
      <Chevron dir="left" w={6} t={1} c="#333" />
      <HThumb />
      <Chevron dir="right" w={6} t={1} c="#333" />
      <Grip />
    </HScroll>
    <FileTabs>
      <Folder />
      {fileTabs.map((t) => (
        <FileTab key={t.name} $active={t.active}>
          <TabMark c={t.c} />
          <TabName>{t.name}</TabName>
          <TabClose />
        </FileTab>
      ))}
    </FileTabs>
    <StatusBar>
      <StatusHelp>For Help, press F1</StatusHelp>
      {statusCells.map(([t, w], i) => (
        <StatusCell key={i} $w={w}>{t}</StatusCell>
      ))}
      <StatusCell $w={46} $end>3,251</StatusCell>
    </StatusBar>
  </Editor>
);

const ChatPane = () => (
  <Chat>
    <ChatHeader>
      <IconButton aria-label="Collapse chat"><Chevron dir="down" w={8} t={1.5} /></IconButton>
      <ChatTitle>Chat</ChatTitle>
    </ChatHeader>
    <ChatBody>
      <Messages>
        <MessageRow>
          <Avatar $color="#33475f" />
          <Bubbles><Bubble $w={105} /></Bubbles>
        </MessageRow>
        {messages.map((m, i) => (
          <MessageRow key={i}>
            <MessageHead>
              <span>{m.from} to </span>
              <Everyone href="#everyone">Everyone</Everyone>
              <Time>{m.time}</Time>
            </MessageHead>
            <Avatar $color={m.color}>{m.initials}</Avatar>
            <Bubbles>
              {m.bubbles.map((b) => (
                <Bubble key={b} $mine={m.mine}>{b === 'tick' ? <Tick /> : b}</Bubble>
              ))}
            </Bubbles>
          </MessageRow>
        ))}
      </Messages>
      <ChatTrack><ChatThumb /></ChatTrack>
    </ChatBody>
    <Notice><PersonDot />Who can see your messages?</Notice>
    <Compose>
      <ComposeTo>
        <label htmlFor="recipient">To:</label>
        <Recipient>
          <RecipientSelect id="recipient"><option>Everyone</option></RecipientSelect>
          <Chevron dir="down" w={7} t={1.6} />
        </Recipient>
        <IconButton aria-label="Emoji"><Smiley /></IconButton>
      </ComposeTo>
      <ComposeText aria-label="Message" placeholder="Your text can be seen by panelists and other attendees" />
    </Compose>
  </Chat>
);

const Control = ({ name, big, on }: { name: string; big?: boolean; on?: boolean }) => (
  <ControlButton aria-label={name} $big={big} $on={on}><ControlIcon name={name} /></ControlButton>
);

export default function App() {
  return (
    <Window>
      <GlobalStyle />
      <TitleBar>
        <Cone size={16} />
        <TitleText>6010_4 HK_CoreJava_03_07_2022_collection_attended_by_me.mp4 - VLC media player</TitleText>
        <CaptionButtons>
          <CaptionButton aria-label="Minimize"><Caption kind="min" s={10} /></CaptionButton>
          <CaptionButton aria-label="Restore"><Caption kind="max" s={10} /></CaptionButton>
          <CaptionButton aria-label="Close"><Caption kind="close" s={10} /></CaptionButton>
        </CaptionButtons>
      </TitleBar>
      <MenuBar>
        {menus.map((m) => <MenuItem key={m}>{m}</MenuItem>)}
      </MenuBar>
      <Video>
        <Stage>
          <Meeting>
            <Share>
              <ShareTop>
                <DarkPill aria-label="Encrypted"><Shield /></DarkPill>
                <DarkPill><ViewGlyph />View</DarkPill>
              </ShareTop>
              <EditorPane />
              <ShareBottom>
                <AudioSettings>Audio Settings <Chevron dir="up" w={7} /></AudioSettings>
                <ChatToggle>
                  <ChatButton><Speech />Chat</ChatButton>
                  <CaretButton aria-label="Chat options"><Chevron dir="up" w={7} /></CaretButton>
                </ChatToggle>
                <LeaveButton>Leave</LeaveButton>
              </ShareBottom>
            </Share>
            <ChatPane />
          </Meeting>
          <Taskbar compact apps={recordedApps} lang="IN" time="12:11" date="03-07-2022" count={3} />
        </Stage>
        <TextCursor><IBeam /></TextCursor>
      </Video>
      <Controls>
        <SeekRow>
          <Elapsed>53:42</Elapsed>
          <Seek type="range" aria-label="Position" min={0} max={5764} defaultValue={3222} />
          <Remaining>-42:22</Remaining>
        </SeekRow>
        <ButtonRow>
          <Control name="Play" big />
          <ButtonGroup>
            <Control name="Previous" /><Control name="Stop" /><Control name="Next" />
          </ButtonGroup>
          <ButtonGroup>
            <Control name="Fullscreen" /><Control name="Effects" />
          </ButtonGroup>
          <ButtonGroup>
            <Control name="Playlist" /><Control name="Loop" /><Control name="Random" on />
          </ButtonGroup>
          <Volume>
            <Speaker />
            <VolumeMeter><VolumeLabel>125%</VolumeLabel><VolumeWedge /></VolumeMeter>
          </Volume>
        </ButtonRow>
      </Controls>
      <Taskbar apps={desktopApps} lang="US" time="14:04" date="07-07-2022" count={1} />
    </Window>
  );
}
